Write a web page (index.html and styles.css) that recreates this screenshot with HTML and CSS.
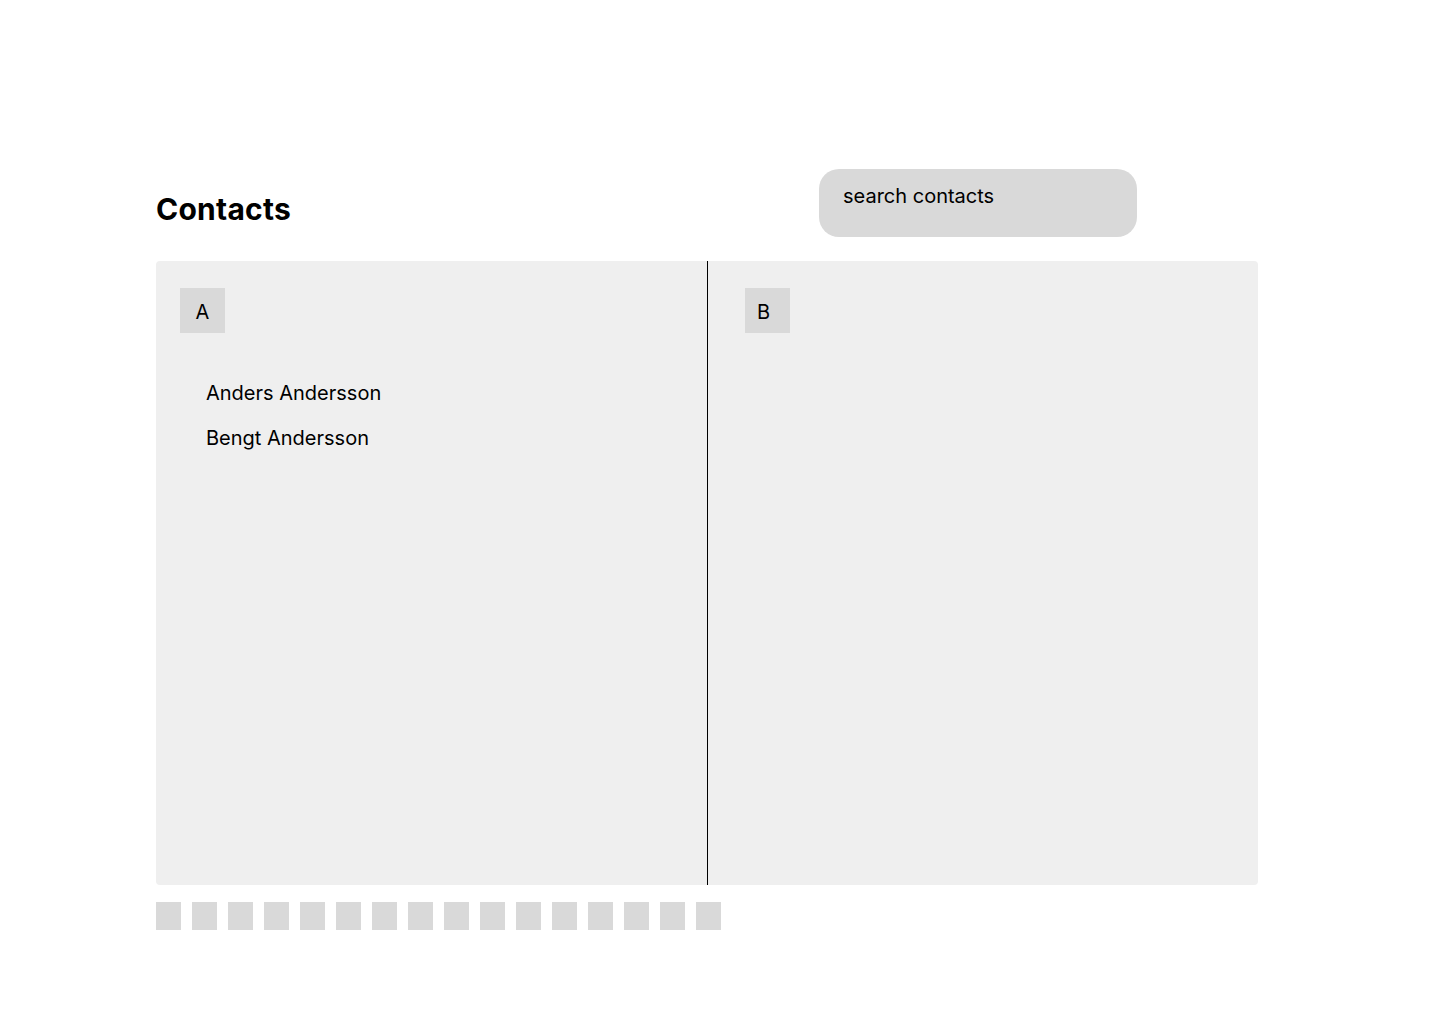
FILE: index.html
```html
<!DOCTYPE html>
<html lang="en">
<head>
<meta charset="utf-8">
<title>Contacts</title>
<link rel="stylesheet" href="styles.css">
</head>
<body>
<main class="page">
  <header class="header">
    <h1 class="title">Contacts</h1>
    <div class="search">search contacts</div>
  </header>
  <section class="panel">
    <div class="column column-left">
      <div class="letter">A</div>
      <ul class="names">
        <li>Anders Andersson</li>
        <li>Bengt Andersson</li>
      </ul>
    </div>
    <div class="column column-right">
      <div class="letter">B</div>
    </div>
  </section>
  <nav class="pager">
    <span class="dot"></span><span class="dot"></span><span class="dot"></span><span class="dot"></span>
    <span class="dot"></span><span class="dot"></span><span class="dot"></span><span class="dot"></span>
    <span class="dot"></span><span class="dot"></span><span class="dot"></span><span class="dot"></span>
    <span class="dot"></span><span class="dot"></span><span class="dot"></span><span class="dot"></span>
  </nav>
</main>
</body>
</html>
```
FILE: styles.css
```css
* { box-sizing: border-box; }
html, body { margin: 0; padding: 0; background: #ffffff; }
body {
  font-family: Inter, "Noto Sans", sans-serif;
  color: #000;
}
.page {
  padding: 169px 0 0 156px;
  width: 1258px;
}
.header {
  display: flex;
  align-items: flex-start;
  width: 1102px;
}
.title {
  margin: 22px 0 0 0;
  font-size: 30px;
  letter-spacing: 0.25px;
  line-height: 36px;
  font-weight: 700;
  width: 663px;
}
.search {
  width: 318px;
  height: 68px;
  border-radius: 20px;
  background: #d9d9d9;
  padding: 15px 24px 0 24px;
  font-size: 20px;
  line-height: 24px;
}
.panel {
  margin-top: 24px;
  width: 1102px;
  height: 624px;
  background: #efefef;
  border-radius: 4px;
  display: grid;
  grid-template-columns: 552px 1fr;
}
.column-left {
  border-right: 1px solid #000;
  padding: 27px 0 0 24px;
}
.column-right {
  padding: 27px 0 0 37px;
}
.letter {
  width: 45px;
  height: 45px;
  background: #d9d9d9;
  display: flex;
  align-items: center;
  justify-content: center;
  font-size: 20px;
  line-height: 24px;
  padding-top: 3px;
}
.column-right .letter { justify-content: flex-start; padding-left: 12px; }
.names {
  list-style: none;
  margin: 48px 0 0 0;
  padding: 0 0 0 26px;
  display: flex;
  flex-direction: column;
  gap: 21px;
  font-size: 20px;
  line-height: 24px;
}
.pager {
  display: flex;
  gap: 11px;
  margin-top: 17px;
}
.dot {
  width: 25px;
  height: 28px;
  background: #d9d9d9;
}
```
